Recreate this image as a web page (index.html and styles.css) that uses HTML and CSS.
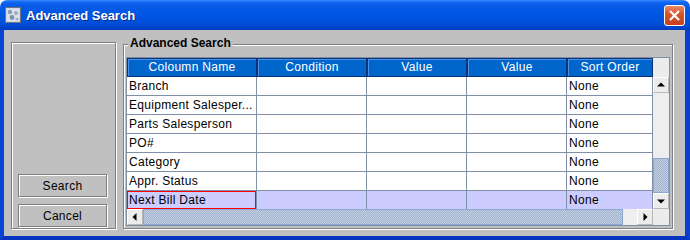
FILE: index.html
```html
<!DOCTYPE html>
<html lang="en">
<head>
    <meta charset="UTF-8">
    <title>Advanced Search</title>
    <link rel="stylesheet" href="styles.css">
</head>
<body>

<div class="window">
    <div class="titlebar">
        <svg class="app-icon" width="16" height="16" viewBox="0 0 16 16">
            <rect x="0.5" y="0.5" width="15" height="15" fill="#c8ccd4" stroke="#6c7480"/>
            <rect x="1.5" y="1.5" width="13" height="13" fill="#dde2ea"/>
            <circle cx="5" cy="5" r="2.2" fill="#8a9cb8"/>
            <circle cx="11" cy="6" r="2" fill="#9aaac0"/>
            <circle cx="7" cy="10.5" r="2.4" fill="#7c90ae"/>
            <circle cx="12" cy="12" r="1.6" fill="#a4b2c6"/>
        </svg>
        <span class="title">Advanced Search</span>
        <div class="close-btn">
            <svg width="21" height="21" viewBox="0 0 21 21">
                <path d="M6 6L15 15M15 6L6 15" stroke="#fff" stroke-width="2.2"/>
            </svg>
        </div>
    </div>

    <div class="frame">
        <div class="side etched">
            <button class="btn etched">Search</button>
            <button class="btn etched">Cancel</button>
        </div>

        <div class="group etched">
            <span class="group-title">Advanced Search</span>
            <div class="scroll-pane">
                <div class="col-header">
                    <div class="hcell">Coloumn Name</div>
                    <div class="hcell">Condition</div>
                    <div class="hcell">Value</div>
                    <div class="hcell">Value</div>
                    <div class="hcell">Sort Order</div>
                </div>
                <div class="corner"></div>

                <div class="viewport">
                    <div class="row">
                        <div class="cell">Branch</div><div class="cell"></div><div class="cell"></div><div class="cell"></div><div class="cell">None</div>
                    </div>
                    <div class="row">
                        <div class="cell">Equipment Salesper...</div><div class="cell"></div><div class="cell"></div><div class="cell"></div><div class="cell">None</div>
                    </div>
                    <div class="row">
                        <div class="cell">Parts Salesperson</div><div class="cell"></div><div class="cell"></div><div class="cell"></div><div class="cell">None</div>
                    </div>
                    <div class="row">
                        <div class="cell">PO#</div><div class="cell"></div><div class="cell"></div><div class="cell"></div><div class="cell">None</div>
                    </div>
                    <div class="row">
                        <div class="cell">Category</div><div class="cell"></div><div class="cell"></div><div class="cell"></div><div class="cell">None</div>
                    </div>
                    <div class="row">
                        <div class="cell">Appr. Status</div><div class="cell"></div><div class="cell"></div><div class="cell"></div><div class="cell">None</div>
                    </div>
                    <div class="row selected">
                        <div class="cell focused">Next Bill Date</div><div class="cell"></div><div class="cell"></div><div class="cell"></div><div class="cell">None</div>
                    </div>
                </div>

                <div class="vscroll">
                    <div class="arrow-btn">
                        <svg width="16" height="16" viewBox="0 0 16 16"><path d="M4 9.5h8L8 5.5z"/></svg>
                    </div>
                    <div class="vtrack"><div class="thumb vthumb"></div></div>
                    <div class="arrow-btn">
                        <svg width="16" height="16" viewBox="0 0 16 16"><path d="M4 6.5h8L8 10.5z"/></svg>
                    </div>
                </div>

                <div class="hscroll">
                    <div class="arrow-btn">
                        <svg width="16" height="16" viewBox="0 0 16 16"><path d="M9.5 4v8L5.5 8z"/></svg>
                    </div>
                    <div class="htrack"><div class="thumb hthumb"></div></div>
                    <div class="arrow-btn">
                        <svg width="16" height="16" viewBox="0 0 16 16"><path d="M6.5 4v8L10.5 8z"/></svg>
                    </div>
                </div>
                <div class="corner"></div>
            </div>
        </div>
    </div>
</div>

</body>
</html>
```

FILE: styles.css
```css
body {
    margin: 0;
    background-color: #ffffff;
    font-family: "Liberation Sans", Arial, sans-serif;
    font-size: 12px;
}

.window {
    width: 690px;
    height: 240px;
    display: flex;
    flex-direction: column;
    border-radius: 7px 7px 0 0;
    overflow: hidden;
}

/* title bar */
.titlebar {
    height: 30px;
    flex: none;
    display: flex;
    align-items: center;
    padding: 0 5px 0 5px;
    background: linear-gradient(to bottom, #3d8bfd 0, #1069f5 2px, #0a5ce8 5px, #0058e4 12px, #0054de 20px, #0048d0 26px, #003bbf 30px);
}
.app-icon {
    flex: none;
    margin-top: -1px;
}
.title {
    flex: 1;
    margin-left: 5px;
    color: #ffffff;
    font-weight: bold;
    font-size: 13px;
    text-shadow: 1px 1px 0 #0a2a90;
}
.close-btn {
    width: 21px;
    height: 21px;
    box-sizing: border-box;
    border: 1px solid #ffffff;
    border-radius: 3px;
    background: linear-gradient(to bottom, #e88a68 0, #d9552c 40%, #c8401a 100%);
    display: flex;
    align-items: center;
    justify-content: center;
}
.close-btn svg {
    flex: none;
}

/* window body */
.frame {
    flex: 1;
    display: flex;
    gap: 7px;
    padding: 12px 12px 7px 7px;
    background-color: #c0c0c0;
    border-style: solid;
    border-width: 0 5px 4px 4px;
    border-color: #0a44d6 #0b3ecc #0634c0 #0a44d6;
}

.etched {
    border: 1px solid #808080;
    box-shadow: 1px 1px 0 #ffffff, inset 1px 1px 0 #ffffff;
}

.side {
    width: 105px;
    box-sizing: border-box;
    display: flex;
    flex-direction: column;
    justify-content: flex-end;
    gap: 7px;
    padding: 0 8px 1px 6px;
}
.btn {
    height: 23px;
    margin: 0;
    padding: 0;
    background-color: #c0c0c0;
    font-family: "Liberation Sans", Arial, sans-serif;
    font-size: 12px;
    letter-spacing: 0.3px;
    color: #000000;
}

.group {
    position: relative;
    width: 550px;
    box-sizing: border-box;
    margin-top: 2px;
    padding: 12px 2px 2px 2px;
    align-self: flex-start;
}
.group-title {
    position: absolute;
    top: -9px;
    left: 4px;
    padding: 0 2px;
    line-height: 14px;
    font-weight: bold;
    background-color: #c0c0c0;
    color: #000000;
}

/* table in a scroll pane */
.scroll-pane {
    display: grid;
    grid-template-columns: 526px 16px;
    grid-template-rows: 19px 132px 16px;
    border: 1px solid #7f8ea3;
    background-color: #ffffff;
}
.col-header, .row {
    display: grid;
    grid-template-columns: 130px 110px 100px 100px 86px;
}
.hcell {
    height: 19px;
    box-sizing: border-box;
    border: 1px solid #0b3477;
    box-shadow: inset 1px 1px 0 #4a92ea;
    background-color: #0066cc;
    color: #ffffff;
    text-align: center;
    line-height: 17px;
    letter-spacing: 0.3px;
}
.corner {
    background-color: #ececec;
}
.viewport {
    overflow: hidden;
}
.cell {
    height: 19px;
    box-sizing: border-box;
    border-right: 1px solid #8090a6;
    border-bottom: 1px solid #8090a6;
    padding-left: 2px;
    line-height: 18px;
    letter-spacing: 0.3px;
    white-space: nowrap;
    overflow: hidden;
    color: #000000;
}
.row.selected .cell {
    background-color: #ccccff;
}
.cell.focused {
    box-shadow: inset 0 0 0 1px #ff0000;
}

/* scroll bars */
.vscroll, .hscroll {
    display: flex;
    background-color: #eeeeee;
}
.vscroll {
    flex-direction: column;
}
.arrow-btn {
    width: 16px;
    height: 16px;
    flex: none;
    box-sizing: border-box;
    border: 1px solid #ffffff;
    border-right-color: #b8b8b8;
    border-bottom-color: #b8b8b8;
    background-color: #ececec;
    display: flex;
    align-items: center;
    justify-content: center;
}
.arrow-btn svg {
    flex: none;
}
.vtrack {
    flex: 1;
    display: flex;
    flex-direction: column;
    justify-content: flex-end;
}
.htrack {
    flex: 1;
    display: flex;
}
.thumb {
    box-sizing: border-box;
    border: 1px solid #8aa6d2;
    background: repeating-conic-gradient(#9fb2cc 0 25%, #c6d2e4 0 50%) 0 0 / 2px 2px;
}
.vthumb {
    height: 35px;
}
.hthumb {
    width: 480px;
}
```
